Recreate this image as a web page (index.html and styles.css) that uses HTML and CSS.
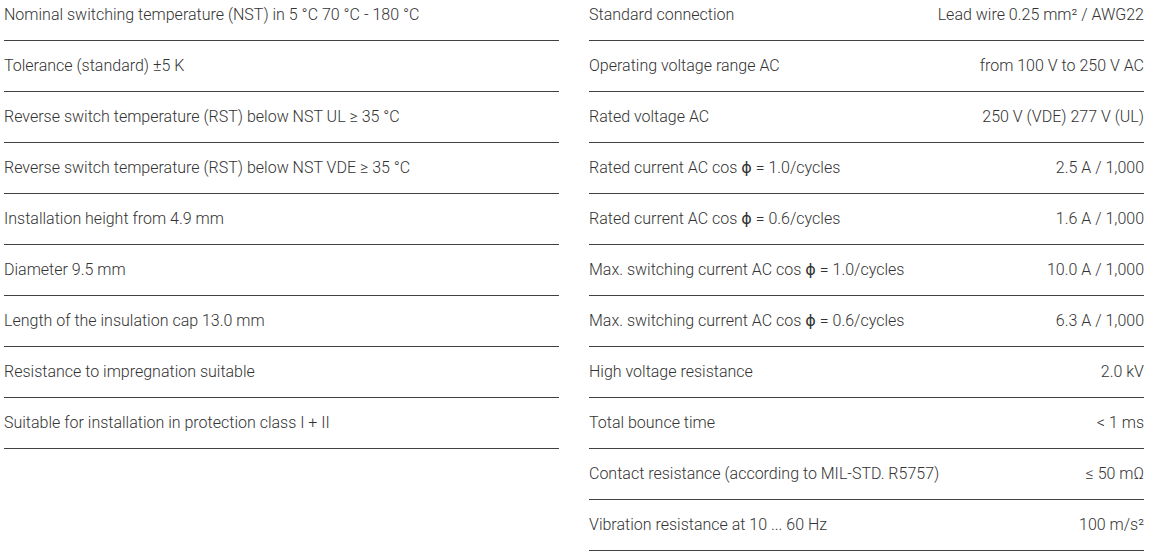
FILE: index.html
```html
<!DOCTYPE html>
<html lang="en">
<head>
<meta charset="utf-8">
<title>Specifications</title>
<link rel="stylesheet" href="styles.css">
</head>
<body>
<div class="specs">
  <div class="col">
    <div class="row"><span class="label">Nominal switching temperature (NST) in 5 °C 70 °C - 180 °C</span></div>
    <div class="row"><span class="label">Tolerance (standard) ±5 K</span></div>
    <div class="row"><span class="label">Reverse switch temperature (RST) below NST UL ≥ 35 °C</span></div>
    <div class="row"><span class="label">Reverse switch temperature (RST) below NST VDE ≥ 35 °C</span></div>
    <div class="row"><span class="label">Installation height from 4.9 mm</span></div>
    <div class="row"><span class="label">Diameter 9.5 mm</span></div>
    <div class="row"><span class="label">Length of the insulation cap 13.0 mm</span></div>
    <div class="row"><span class="label">Resistance to impregnation suitable</span></div>
    <div class="row"><span class="label">Suitable for installation in protection class I + II</span></div>
  </div>
  <div class="col">
    <div class="row"><span class="label">Standard connection</span><span class="value">Lead wire 0.25 mm² / AWG22</span></div>
    <div class="row"><span class="label">Operating voltage range AC</span><span class="value">from 100 V to 250 V AC</span></div>
    <div class="row"><span class="label">Rated voltage AC</span><span class="value">250 V (VDE) 277 V (UL)</span></div>
    <div class="row"><span class="label">Rated current AC cos <b class="phi">ϕ</b> = 1.0/cycles</span><span class="value">2.5 A / 1,000</span></div>
    <div class="row"><span class="label">Rated current AC cos <b class="phi">ϕ</b> = 0.6/cycles</span><span class="value">1.6 A / 1,000</span></div>
    <div class="row"><span class="label">Max. switching current AC cos <b class="phi">ϕ</b> = 1.0/cycles</span><span class="value">10.0 A / 1,000</span></div>
    <div class="row"><span class="label">Max. switching current AC cos <b class="phi">ϕ</b> = 0.6/cycles</span><span class="value">6.3 A / 1,000</span></div>
    <div class="row"><span class="label">High voltage resistance</span><span class="value">2.0 kV</span></div>
    <div class="row"><span class="label">Total bounce time</span><span class="value">&lt; 1 ms</span></div>
    <div class="row"><span class="label">Contact resistance (according to MIL-STD. R5757)</span><span class="value">≤ 50 mΩ</span></div>
    <div class="row"><span class="label">Vibration resistance at 10 ... 60 Hz</span><span class="value">100 m/s²</span></div>
  </div>
</div>
</body>
</html>
```

FILE: styles.css
```css
html, body {
  margin: 0;
  padding: 0;
  background: #ffffff;
}
body {
  font-family: Roboto, "Liberation Sans", sans-serif;
  font-weight: 300;
  font-size: 16px;
  color: #333333;
}
.specs {
  display: grid;
  grid-template-columns: 555px 555px;
  column-gap: 30px;
  align-items: start;
  margin: -10px 0 0 4px;
}
.row {
  box-sizing: border-box;
  height: 51px;
  padding-bottom: 2px;
  display: flex;
  align-items: center;
  justify-content: space-between;
  border-bottom: 1px solid #3f4244;
}
.label, .value {
  white-space: nowrap;
}
.phi {
  font-family: "DejaVu Sans", sans-serif;
  font-weight: 400;
  font-size: 16px;
}
```
